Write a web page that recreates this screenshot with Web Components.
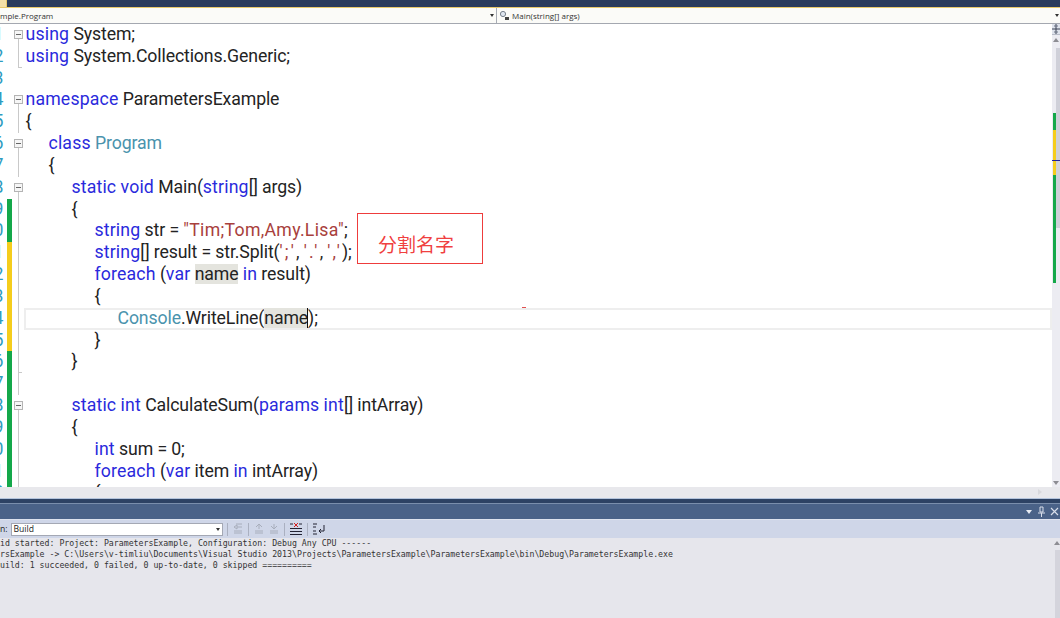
<!DOCTYPE html>
<html lang="en">
<head>
<meta charset="utf-8">
<title>ParametersExample</title>
<style>
  html, body { margin: 0; height: 100%; background: #e6e6ec; overflow: hidden; }
</style>
</head>
<body>
<vs-window>
  <nav-bar slot="nav" left="mple.Program" right="Main(string[] args)"></nav-bar>
  <code-editor slot="editor">
    <code-line n="1" fold="box"><span class="k">using</span> System;</code-line>
    <code-line n="2" fold="end"><span class="k">using</span> System.Collections.Generic;</code-line>
    <code-line n="3"></code-line>
    <code-line n="4" fold="box"><span class="k">namespace</span> ParametersExample</code-line>
    <code-line n="5" fold="line">{</code-line>
    <code-line n="6" fold="box" indent="1"><span class="k">class</span> <span class="t">Program</span></code-line>
    <code-line n="7" fold="line" indent="1">{</code-line>
    <code-line n="8" fold="box" indent="2"><span class="k">static</span> <span class="k">void</span> Main(<span class="k">string</span>[] args)</code-line>
    <code-line n="9" fold="line" indent="2" change="green">{</code-line>
    <code-line n="10" fold="line" indent="3" change="green"><span class="k">string</span> str = <span class="s">"Tim;Tom,Amy.Lisa"</span>;</code-line>
    <code-line n="11" fold="line" indent="3" change="yellow"><span class="k">string</span>[] result = str.Split(<span class="s w">';'</span>, <span class="s w">'.'</span>, <span class="s w">','</span>);</code-line>
    <code-line n="12" fold="line" indent="3" change="yellow"><span class="k">foreach</span> (<span class="k">var</span> <span class="h">name</span> <span class="k">in</span> result)</code-line>
    <code-line n="13" fold="line" indent="3" change="yellow">{</code-line>
    <code-line n="14" fold="line" indent="4" change="yellow" current><span class="t">Console</span>.WriteLine(<span class="h">name</span><span class="c"></span>);</code-line>
    <code-line n="15" fold="line" indent="3" change="yellow">}</code-line>
    <code-line n="16" fold="tick" indent="2" change="green">}</code-line>
    <code-line n="17" fold="line" change="green"></code-line>
    <code-line n="18" fold="box" indent="2" change="green"><span class="k">static</span> <span class="k">int</span> CalculateSum(<span class="k">params</span> <span class="k">int</span>[] intArray)</code-line>
    <code-line n="19" fold="line" indent="2" change="green">{</code-line>
    <code-line n="20" fold="line" indent="3" change="green"><span class="k">int</span> sum = 0;</code-line>
    <code-line n="21" fold="line" indent="3" change="green"><span class="k">foreach</span> (<span class="k">var</span> item <span class="k">in</span> intArray)</code-line>
    <code-line n="22" fold="line" indent="3" change="green">{</code-line>
    <note-box slot="over">分割名字</note-box>
  </code-editor>
  <output-pane slot="output">
    <span slot="line">id started: Project: ParametersExample, Configuration: Debug Any CPU ------</span>
    <span slot="line">rsExample -&gt; C:\Users\v-timliu\Documents\Visual Studio 2013\Projects\ParametersExample\ParametersExample\bin\Debug\ParametersExample.exe</span>
    <span slot="line">uild: 1 succeeded, 0 failed, 0 up-to-date, 0 skipped ==========</span>
  </output-pane>
</vs-window>

<script>
function shadow(host, html) {
  host.attachShadow({ mode: 'open' }).innerHTML = html;
}

customElements.define('vs-window', class extends HTMLElement {
  constructor() {
    super();
    shadow(this, `<style>
      :host { display: grid; width: 1060px; height: 618px; overflow: hidden;
        grid-template-rows: 7px 1px 15px 1px 1fr; background: #e6e6ec; }
      .title { background: #2a3b5c; position: relative; }
      .title i { position: absolute; left: 0; top: 0; width: 6px; height: 7px; background: #f3dfa8; border-right: 1px solid #e8c96c; }
      .rule { background: #e8c96c; }
      .shade { background: #a4a8b0; }
      .body { display: flex; flex-direction: column; min-height: 0; }
    </style>
    <div class="title"><i></i></div>
    <div class="rule"></div>
    <slot name="nav"></slot>
    <div class="shade"></div>
    <div class="body"><slot name="editor"></slot><slot name="output"></slot></div>`);
  }
});

customElements.define('nav-bar', class extends HTMLElement {
  constructor() {
    super();
    shadow(this, `<style>
      :host { display: flex; height: 15px; background: #fbfbf8; overflow: hidden;
        font: 8px/16px "Open Sans", "Liberation Sans", sans-serif; color: #333; }
      .l { width: 497px; box-sizing: border-box; display: flex; justify-content: space-between;
        border-right: 1px solid #a8acb4; padding-right: 1px; }
      .r { flex: 1; display: flex; align-items: center; gap: 2px; padding-left: 2px;
        justify-content: flex-start; position: relative; }
      .arrow { width: 0; height: 0; border: 2px solid transparent; border-top: 3px solid #333;
        border-bottom: 0; align-self: center; margin-right: 1px; }
      .end { position: absolute; right: 0; top: 6px; }
      svg { display: block; }
    </style>
    <div class="l"><span></span><span class="arrow"></span></div>
    <div class="r">
      <svg width="11" height="11" viewBox="0 0 11 11"><circle cx="4" cy="4" r="2.6" fill="#dfe6f0" stroke="#77808c"/><rect x="6" y="7" width="4" height="3" fill="#444"/></svg>
      <span class="rt"></span>
      <span class="arrow end"></span>
    </div>`);
    const left = this.shadowRoot.querySelector('.l span');
    left.textContent = this.getAttribute('left');
    this.shadowRoot.querySelector('.rt').textContent = this.getAttribute('right');
  }
});

customElements.define('code-editor', class extends HTMLElement {
  constructor() {
    super();
    shadow(this, `<style>
      :host { display: flex; flex-direction: column; height: 474px; flex: none; }
      .main { display: flex; height: 463px; position: relative; background: #fff; overflow: hidden; }
      .lines { width: 1052px; flex: none; overflow: hidden; }
      .bar { width: 8px; flex: none; background: #ececf2; display: flex; flex-direction: column; position: relative; }
      .split { height: 10px; background: #dfe3ec; border-bottom: 1px solid #b8bcc8; }
      .split svg { display: block; }
      .up { height: 13px; position: relative; }
      .up::after, .down::after { content: ""; position: absolute; right: 1px; border: 3px solid transparent; }
      .up::after { top: 3px; border-bottom: 4px solid #8d8d93; border-top: 0; }
      .over { flex: 1; background:
        linear-gradient(#14a84a, #14a84a) 1px 65px / 3px 17px no-repeat,
        linear-gradient(#f5cd1c, #f5cd1c) 1px 82px / 3px 45px no-repeat,
        linear-gradient(#14a84a, #14a84a) 1px 127px / 3px 108px no-repeat,
        linear-gradient(#cfd0d9, #cfd0d9) 4px 0 / 4px 180px no-repeat; }
      .down { height: 13px; position: relative; }
      .down::after { bottom: 2px; border-top: 4px solid #8d8d93; border-bottom: 0; }
      .pos { position: absolute; left: 0; right: 0; top: 136px; height: 1px; background: #20209a; }
      .hs { height: 11px; background: #e8e8ec; position: relative; }
      .hs::after { content: ""; position: absolute; right: 18px; top: 2px; border: 3px solid transparent;
        border-left: 4px solid #d8d8dc; border-right: 0; }
      .dash { position: absolute; left: 522px; top: 283px; width: 4px; height: 1px; background: #e05050; }
    </style>
    <div class="main">
      <div class="lines"><slot></slot></div>
      <div class="bar">
        <div class="split"><svg width="8" height="10" viewBox="0 0 8 10" fill="none" stroke="#3a4254"><path d="M4 0v10M0 5h8"/><path d="M2 2h4M2 8h4" stroke="#6a7284"/></svg></div>
        <div class="up"></div><div class="over"></div><div class="down"></div><div class="pos"></div>
      </div>
      <div class="dash"></div>
      <slot name="over"></slot>
    </div>
    <div class="hs"></div>`);
  }
});

customElements.define('code-line', class extends HTMLElement {
  constructor() {
    super();
    const n = this.getAttribute('n');
    const fold = this.getAttribute('fold') || '';
    const indent = +(this.getAttribute('indent') || 0);
    const change = this.getAttribute('change') || '';
    const cur = this.hasAttribute('current');
    shadow(this, `<style>
      :host { display: grid; grid-template-columns: 7px 5px 12px 1fr; height: 21.84px;
        font: 17.7px/21.5px Roboto, "Liberation Sans", sans-serif; color: #232323; white-space: pre; }
      .num { color: #2f9bc0; overflow: hidden; direction: rtl; width: 3.5px; }
      .change.green { background: #14a84a; }
      .change.yellow { background: #f5cd1c; }
      .fold { position: relative; }
      .fold.line::before, .fold.box::after, .fold.tick::before, .fold.end::before {
        content: ""; position: absolute; left: 6px; top: 0; bottom: 0; width: 1px; background: #c9c9c9; }
      .fold.end::after, .fold.tick::after { content: ""; position: absolute; left: 6px; bottom: 0; width: 4px; height: 1px; background: #c9c9c9; }
      .fold.box::after { top: 15px; }
      .box i { position: absolute; left: 2px; top: 6px; width: 7px; height: 7px; border: 1px solid #b4b4b4; background: #f6f6f6; z-index: 1; }
      .box i::after { content: ""; position: absolute; left: 1px; right: 1px; top: 3px; height: 1px; background: #666; }
      .code { padding-left: calc(1.5px + ${indent} * 23px); min-width: 0; height: 21.84px; letter-spacing: -.12px; }
      .code.cur { box-shadow: inset 0 0 0 2px #eeeeee; }
      ::slotted(.k) { color: #2a2adc; letter-spacing: .15px; }
      ::slotted(.t) { color: #4a93ad; }
      ::slotted(.s) { color: #a8403c; letter-spacing: .3px; }
      ::slotted(.w) { color: #a8403c; letter-spacing: 2.2px; }
      ::slotted(.h) { background: #e4e4de; }
      ::slotted(.c) { border-left: 1px solid #111; margin-left: -1px; }
    </style>
    <div class="num">${n}</div>
    <div class="change ${change}"></div>
    <div class="fold ${fold}">${fold === 'box' ? '<i></i>' : ''}</div>
    <div class="code ${cur ? 'cur' : ''}"><slot></slot></div>`);
  }
});

customElements.define('note-box', class extends HTMLElement {
  constructor() {
    super();
    shadow(this, `<style>
      :host { position: absolute; left: 357px; top: 189px; height: 39px;
        border: 1px solid #ee3c3c; background: #fff; color: #f04040; display: flex; align-items: center;
        padding: 10px 0 0 20px; box-sizing: content-box; width: 104px;
        font: 19px/24px "Noto Sans CJK SC", sans-serif; }
    </style><slot></slot>`);
  }
});

customElements.define('output-pane', class extends HTMLElement {
  constructor() {
    super();
    shadow(this, `<style>
      :host { display: flex; flex-direction: column; height: 120px; background: #e6e6ec; }
      .edge { height: 1px; background: #b4c4dc; flex: none; }
      .dark { height: 4px; background: #2d4264; flex: none; }
      .head { height: 16px; box-sizing: border-box; background: #4a6288; border-top: 1px solid #7a8eac; display: flex; justify-content: flex-end; align-items: center;
        gap: 5px; padding-right: 1px; flex: none; }
      svg { display: block; }
      .tools { height: 19px; flex: none; background: #cfd6e8; display: flex; align-items: center; gap: 3px; box-sizing: border-box; border-top: 1px solid #dde2ee;
        font: 8.6px/13px "Open Sans", "Liberation Sans", sans-serif; color: #222; }
      .combo { width: 212px; height: 13px; background: #fff; border: 1px solid #a4a8b4; box-sizing: border-box; display: flex; justify-content: space-between; align-items: center; padding: 0 2px; line-height: 11px; }
      .combo .a { width: 0; height: 0; border: 2.5px solid transparent; border-top: 3px solid #333; border-bottom: 0; }
      .sep { width: 1px; height: 13px; background: #aab0c0; margin: 0 1px; }
      .out { flex: 1; position: relative; display: flex; min-height: 0; }
      .out::after { content: ""; position: absolute; right: 0; top: 3px; border: 3px solid transparent; border-bottom: 4px solid #8d8d93; border-top: 0; }
      .text { flex: 1; font: 8.22px/11px "DejaVu Sans Mono", "Liberation Mono", monospace; color: #333; white-space: pre; overflow: hidden; display: flex; flex-direction: column; }
      .sb { width: 5px; background: #d4d4dc; margin: 12px 0 0 0; }
    </style>
    <div class="edge"></div><div class="dark"></div>
    <div class="head">
      <svg width="8" height="6" viewBox="0 0 8 6"><path d="M1 1h6L4 5z" fill="#e8ecf4"/></svg>
      <svg width="7" height="11" viewBox="0 0 7 11" fill="none" stroke="#d8deea"><path d="M2 1h3v5H2zM0 7h7M3.5 7v4"/></svg>
      <svg width="9" height="9" viewBox="0 0 9 9" fill="none" stroke="#d8deea" stroke-width="1.2"><path d="M1 1l7 7M8 1L1 8"/></svg>
    </div>
    <div class="tools"><span>n:</span>
      <div class="combo"><span>Build</span><span class="a"></span></div>
      <span class="sep"></span>
      <svg width="12" height="12" viewBox="0 0 12 12" fill="none" stroke="#a8aebc"><path d="M4 1h6M2 4l3-2v4zM5 4h5M2 8h8M2 10h8"/></svg>
      <span class="sep"></span>
      <svg width="12" height="12" viewBox="0 0 12 12" fill="none" stroke="#a8aebc"><path d="M2 8h8M2 10h8M3 4l3-3 3 3M6 1v5"/></svg>
      <svg width="12" height="12" viewBox="0 0 12 12" fill="none" stroke="#a8aebc"><path d="M2 8h8M2 10h8M3 3l3 3 3-3M6 1v5"/></svg>
      <span class="sep"></span>
      <svg width="14" height="14" viewBox="0 0 14 14" fill="none" stroke="#223"><path d="M1 6.5h12M1 9.5h12M1 12.5h12M1 2h3M10 2h3"/><path d="M5 1l4 4M9 1L5 5" stroke="#d02020"/></svg>
      <span class="sep"></span>
      <svg width="14" height="14" viewBox="0 0 14 14" fill="none" stroke="#223"><path d="M1 2h4M1 5h3M1 9h3M1 12h4M12 3v6H7M9 7L7 9l2 2"/></svg>
    </div>
    <div class="out"><div class="text"><slot name="line"></slot></div><div class="sb"></div></div>`);
  }
});
</script>
</body>
</html>
